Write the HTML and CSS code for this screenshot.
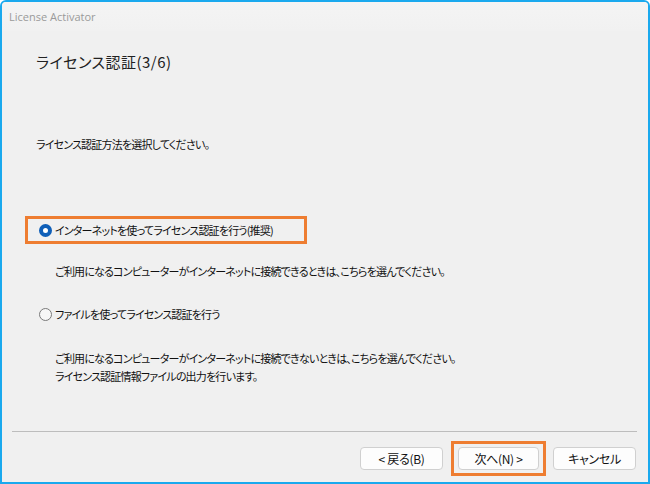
FILE: index.html
```html
<!DOCTYPE html>
<html lang="ja">

<head>
    <meta charset="UTF-8">
    <meta name="viewport" content="width=device-width, initial-scale=1.0">
    <title>License Activator</title>
    <link rel="stylesheet" href="styles.css">
</head>

<body>
    <div class="window">
        <div class="titlebar">License Activator</div>

        <main class="content">
            <h1 class="step-title">ライセンス認証(3/6)</h1>

            <p class="lead">ライセンス認証方法を選択してください。</p>

            <!-- 認証方法 -->
            <div class="options">
                <div class="option highlight">
                    <label class="radio-row">
                        <span class="radio checked"></span>
                        <span>インターネットを使ってライセンス認証を行う(推奨)</span>
                    </label>
                </div>
                <p class="desc">ご利用になるコンピューターがインターネットに接続できるときは、こちらを選んでください。</p>

                <div class="option">
                    <label class="radio-row">
                        <span class="radio"></span>
                        <span>ファイルを使ってライセンス認証を行う</span>
                    </label>
                </div>
                <p class="desc">ご利用になるコンピューターがインターネットに接続できないときは、こちらを選んでください。<br>ライセンス認証情報ファイルの出力を行います。</p>
            </div>
        </main>

        <footer class="footer">
            <div class="buttons">
                <button class="btn">&lt; 戻る(B)</button>
                <span class="btn-wrap"><button class="btn">次へ(N) &gt;</button></span>
                <button class="btn">キャンセル</button>
            </div>
        </footer>
    </div>
</body>

</html>
```

FILE: styles.css
```css
/* 基本 */
html, body {
    margin: 0;
    padding: 0;
    background-color: #ffffff;
}

body {
    font-family: "Noto Sans CJK JP", "Noto Sans", sans-serif;
    font-size: 11px;
    font-feature-settings: "palt";
    letter-spacing: -0.8px;
    color: #111;
}

.window {
    box-sizing: border-box;
    width: 650px;
    height: 484px;
    border: 2px solid #1aa9ee;
    border-radius: 6px 6px 0 0;
    background-color: #f0f0f0;
    display: flex;
    flex-direction: column;
    overflow: hidden;
}

.titlebar {
    height: 29px;
    line-height: 29px;
    padding-left: 7px;
    font-size: 11px;
    letter-spacing: 0;
    color: #9a9a9a;
    background: linear-gradient(#f4f4f4, #f1f1f1);
    font-family: "Open Sans", "Noto Sans", sans-serif;
}

.content {
    flex: 1;
    padding: 0 0 0 34px;
}

.step-title {
    margin: 19px 0 0 0;
    font-size: 15px;
    font-weight: normal;
    letter-spacing: 0.5px;
    line-height: 24px;
    color: #222;
}

.lead {
    margin: 61px 0 0 0;
    line-height: 18px;
}

.options {
    margin-top: 63px;
}

.option {
    box-sizing: border-box;
    width: 282px;
    height: 28px;
    margin-left: -11px;
    padding-left: 11px;
    display: flex;
    align-items: center;
    border: 3px solid transparent;
    white-space: nowrap;
}

.option.highlight {
    border-color: #ee7d31;
}

.radio-row {
    display: flex;
    align-items: center;
    gap: 3px;
    line-height: 18px;
}

.radio {
    box-sizing: border-box;
    width: 13px;
    height: 13px;
    border: 1px solid #7a7a7a;
    border-radius: 50%;
    background-color: #f7f7f7;
}

.radio.checked {
    border: 4px solid #0f5fb8;
    background-color: #ffffff;
}

.desc {
    margin: 18px 0 0 19px;
    line-height: 18px;
}

.option + .desc {
    margin-bottom: 20px;
}

.option + .desc + .option + .desc {
    margin-top: 21px;
}

.footer {
    margin: 0 11px 0 10px;
    border-top: 1px solid #bdbdbd;
    height: 50px;
}

.buttons {
    display: flex;
    justify-content: flex-end;
    align-items: center;
    margin-top: 15px;
    padding-right: 1px;
}

.btn {
    box-sizing: border-box;
    width: 83px;
    height: 23px;
    font-family: inherit;
    font-size: 12px;
    font-feature-settings: "palt";
    letter-spacing: -0.3px;
    color: #111;
    background-color: #fdfdfd;
    border: 1px solid #d0d0d0;
    border-radius: 4px;
    padding: 0;
}

/* 次へボタンの強調枠 */
.btn-wrap {
    display: flex;
    border: 3px solid #ee7d31;
    padding: 3px 4px;
    margin: -6px 7px -6px 8px;
}

.btn-wrap .btn {
    width: 81px;
}
```
